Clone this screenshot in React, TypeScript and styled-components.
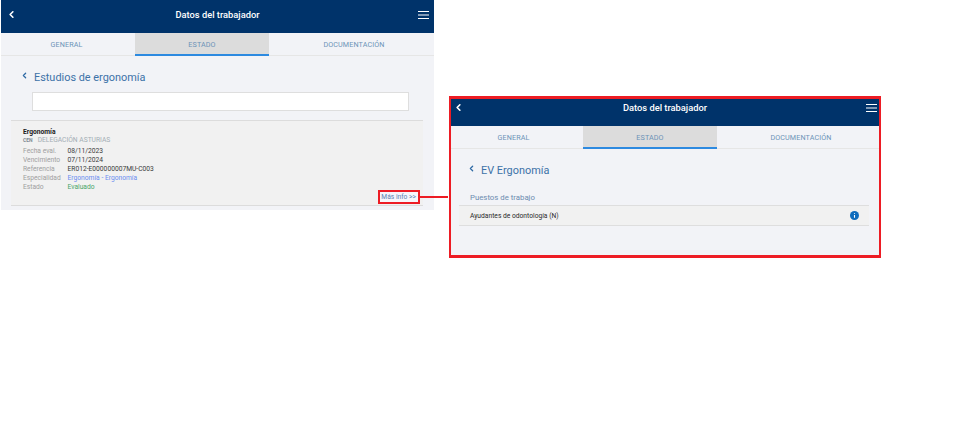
import React from 'react';
import styled, { createGlobalStyle } from 'styled-components';
import { ChevronLeft } from 'lucide-react';

const GlobalStyle = createGlobalStyle`
  html, body {
    margin: 0;
    background: #fff;
    font-family: Roboto, "Liberation Sans", sans-serif;
  }
`;

const Page = styled.div`
  display: flex;
  align-items: flex-start;
  width: 960px;
  height: 428px;
  padding-left: 1px;
  box-sizing: border-box;
  overflow: hidden;
`;

const Screen = styled.section`
  width: 433px;
  height: 210px;
  background: #f2f3f7;
  display: flex;
  flex-direction: column;
`;

const FramedScreen = styled(Screen)`
  position: relative;
  width: 432px;
  height: 162px;
  margin: 96px 0 0 15px;
  border: 3px solid #ed1c24;
  border-left-width: 2px;
  border-right-width: 2px;
  box-sizing: border-box;
`;

const Header = styled.header<{ $height: number; $top: number; $side: number }>`
  height: ${p => p.$height}px;
  flex: none;
  background: #00336a;
  color: #fff;
  display: flex;
  justify-content: space-between;
  padding: ${p => p.$top}px ${p => p.$side}px 0;
  box-sizing: border-box;
`;

const HeaderTitle = styled.h1`
  margin: 0;
  font-size: 9.3px;
  line-height: 16px;
  font-weight: 500;
`;

const BackIcon = styled(ChevronLeft)`
  width: 11px;
  height: 11px;
  margin-top: 2px;
  stroke-width: 3.5px;
`;

const MenuIcon = styled.svg`
  width: 11px;
  height: 10px;
  margin-top: 3px;
`;

const Tabs = styled.nav<{ $first: number }>`
  height: 23px;
  flex: none;
  display: grid;
  grid-template-columns: ${p => p.$first}px 134px 1fr;
  background: #f2f3f7;
  border-bottom: 1px solid #e6e6e6;
  box-sizing: border-box;
`;

const Tab = styled.div<{ $active?: boolean; $nudgeLeft?: number; $nudgeRight?: number }>`
  display: flex;
  align-items: center;
  justify-content: center;
  padding: 1px ${p => p.$nudgeLeft ?? 0}px 0 ${p => p.$nudgeRight ?? 0}px;
  font-size: 7.2px;
  letter-spacing: 0.1px;
  color: #6d93b8;
  background: ${p => (p.$active ? '#dcdcdc' : 'transparent')};
  border-bottom: ${p => (p.$active ? '2px solid #2d8ae0' : '0')};
  margin-bottom: ${p => (p.$active ? '-1px' : '0')};
`;

const TitleRow = styled.div<{ $top: number; $left: number }>`
  display: flex;
  align-items: center;
  gap: 5px;
  margin: ${p => p.$top}px 0 0 ${p => p.$left}px;
  height: 16px;
  flex: none;
`;

const TitleBack = styled(ChevronLeft)`
  width: 9px;
  height: 9px;
  color: #2f6aa5;
  stroke-width: 3.5px;
  margin-top: -3px;
`;

const Title = styled.h2`
  margin: 0;
  padding-top: 1px;
  font-size: 10.9px;
  font-weight: 400;
  color: #3d72a8;
`;

const Search = styled.div`
  height: 19px;
  flex: none;
  margin: 7px 25px 0 31px;
  background: #fff;
  border: 1px solid #dedede;
  box-sizing: border-box;
`;

const Card = styled.article`
  position: relative;
  flex: none;
  height: 86px;
  margin: 9px 11px 0 10px;
  padding: 7px 12px 0;
  background: #f1f1f1;
  border-top: 1px solid #dcdcdc;
  border-bottom: 1px solid #dcdcdc;
  box-sizing: border-box;
`;

const CardTitle = styled.div`
  font-size: 6.7px;
  line-height: 8px;
  font-weight: 700;
  color: #1a1a1a;
`;

const Center = styled.div`
  display: flex;
  align-items: baseline;
  gap: 5px;
  font-size: 6.7px;
  line-height: 9px;
  color: #a3aeb5;
`;

const CenterCode = styled.span`
  font-size: 5px;
  font-weight: 700;
  color: #7d8a93;
`;

const Fields = styled.dl`
  display: grid;
  grid-template-columns: 44.5px 1fr;
  margin: 2px 0 0;
  font-size: 6.7px;
  line-height: 8.9px;
`;

const Label = styled.dt`
  color: #a0a0a0;
`;

const Value = styled.dd<{ $color?: string }>`
  margin: 0;
  color: ${p => p.$color ?? '#3c3c3c'};
`;

const MoreLink = styled.a`
  position: absolute;
  right: 3px;
  bottom: 1px;
  padding: 1px 2px 0 1px;
  font-size: 6.7px;
  line-height: 9px;
  color: #5c82b0;
  background: #f6f6fa;
  border: 2px solid #ed1c24;
`;

const Connector = styled.span`
  position: absolute;
  left: 100%;
  top: 50%;
  width: 30px;
  height: 2px;
  margin-top: -1px;
  background: #ed1c24;
`;

const Subtitle = styled.h3`
  margin: 14px 0 0 19px;
  font-size: 7.8px;
  line-height: 12px;
  font-weight: 400;
  color: #6d8cb0;
`;

const JobRow = styled.div`
  height: 21px;
  margin: 1px 10px 0 8px;
  padding: 0 10px 0 11px;
  background: #f1f1f1;
  border-top: 1px solid #dedede;
  border-bottom: 1px solid #dedede;
  box-sizing: border-box;
  display: flex;
  align-items: center;
  justify-content: space-between;
  font-size: 6.7px;
  color: #2a2a2a;
`;

const InfoIcon = styled.svg`
  width: 9px;
  height: 9px;
`;

const Menu = () => (
  <MenuIcon viewBox="0 0 11 10">
    <path d="M0 1.5h11M0 5h11M0 8.5h11" stroke="#fff" strokeWidth="1.2" />
  </MenuIcon>
);

const AppHeader = ({ height, top, side }: { height: number; top: number; side: number }) => (
  <Header $height={height} $top={top} $side={side}>
    <BackIcon />
    <HeaderTitle>Datos del trabajador</HeaderTitle>
    <Menu />
  </Header>
);

const AppTabs = ({ first, nudgeLeft, nudgeRight }: { first: number; nudgeLeft: number; nudgeRight: number }) => (
  <Tabs $first={first}>
    <Tab $nudgeLeft={nudgeLeft}>GENERAL</Tab>
    <Tab $active>ESTADO</Tab>
    <Tab $nudgeRight={nudgeRight}>DOCUMENTACIÓN</Tab>
  </Tabs>
);

export default function App() {
  return (
    <>
      <GlobalStyle />
      <Page>
        <Screen>
          <AppHeader height={33} top={7} side={5} />
          <AppTabs first={134} nudgeLeft={3} nudgeRight={5} />
          <TitleRow $top={13} $left={19}>
            <TitleBack />
            <Title>Estudios de ergonomía</Title>
          </TitleRow>
          <Search />
          <Card>
            <CardTitle>Ergonomía</CardTitle>
            <Center>
              <CenterCode>CEN</CenterCode>
              DELEGACIÓN ASTURIAS
            </Center>
            <Fields>
              <Label>Fecha eval.</Label>
              <Value>08/11/2023</Value>
              <Label>Vencimiento</Label>
              <Value>07/11/2024</Value>
              <Label>Referencia</Label>
              <Value>ER012-E000000007MU-C003</Value>
              <Label>Especialidad</Label>
              <Value $color="#6d8ff0">Ergonomía - Ergonomía</Value>
              <Label>Estado</Label>
              <Value $color="#4aa66a">Evaluado</Value>
            </Fields>
            <MoreLink>
              Más info &gt;&gt;
              <Connector />
            </MoreLink>
          </Card>
        </Screen>
        <FramedScreen>
          <AppHeader height={27} top={1} side={2} />
          <AppTabs first={132} nudgeLeft={7} nudgeRight={6} />
          <TitleRow $top={13} $left={16}>
            <TitleBack />
            <Title>EV Ergonomía</Title>
          </TitleRow>
          <Subtitle>Puestos de trabajo</Subtitle>
          <JobRow>
            Ayudantes de odontología (N)
            <InfoIcon viewBox="0 0 10 10">
              <circle cx="5" cy="5" r="5" fill="#0f6cbd" />
              <path d="M5 4.4v3.2M5 2.4v1" stroke="#fff" strokeWidth="1.2" />
            </InfoIcon>
          </JobRow>
        </FramedScreen>
      </Page>
    </>
  );
}
